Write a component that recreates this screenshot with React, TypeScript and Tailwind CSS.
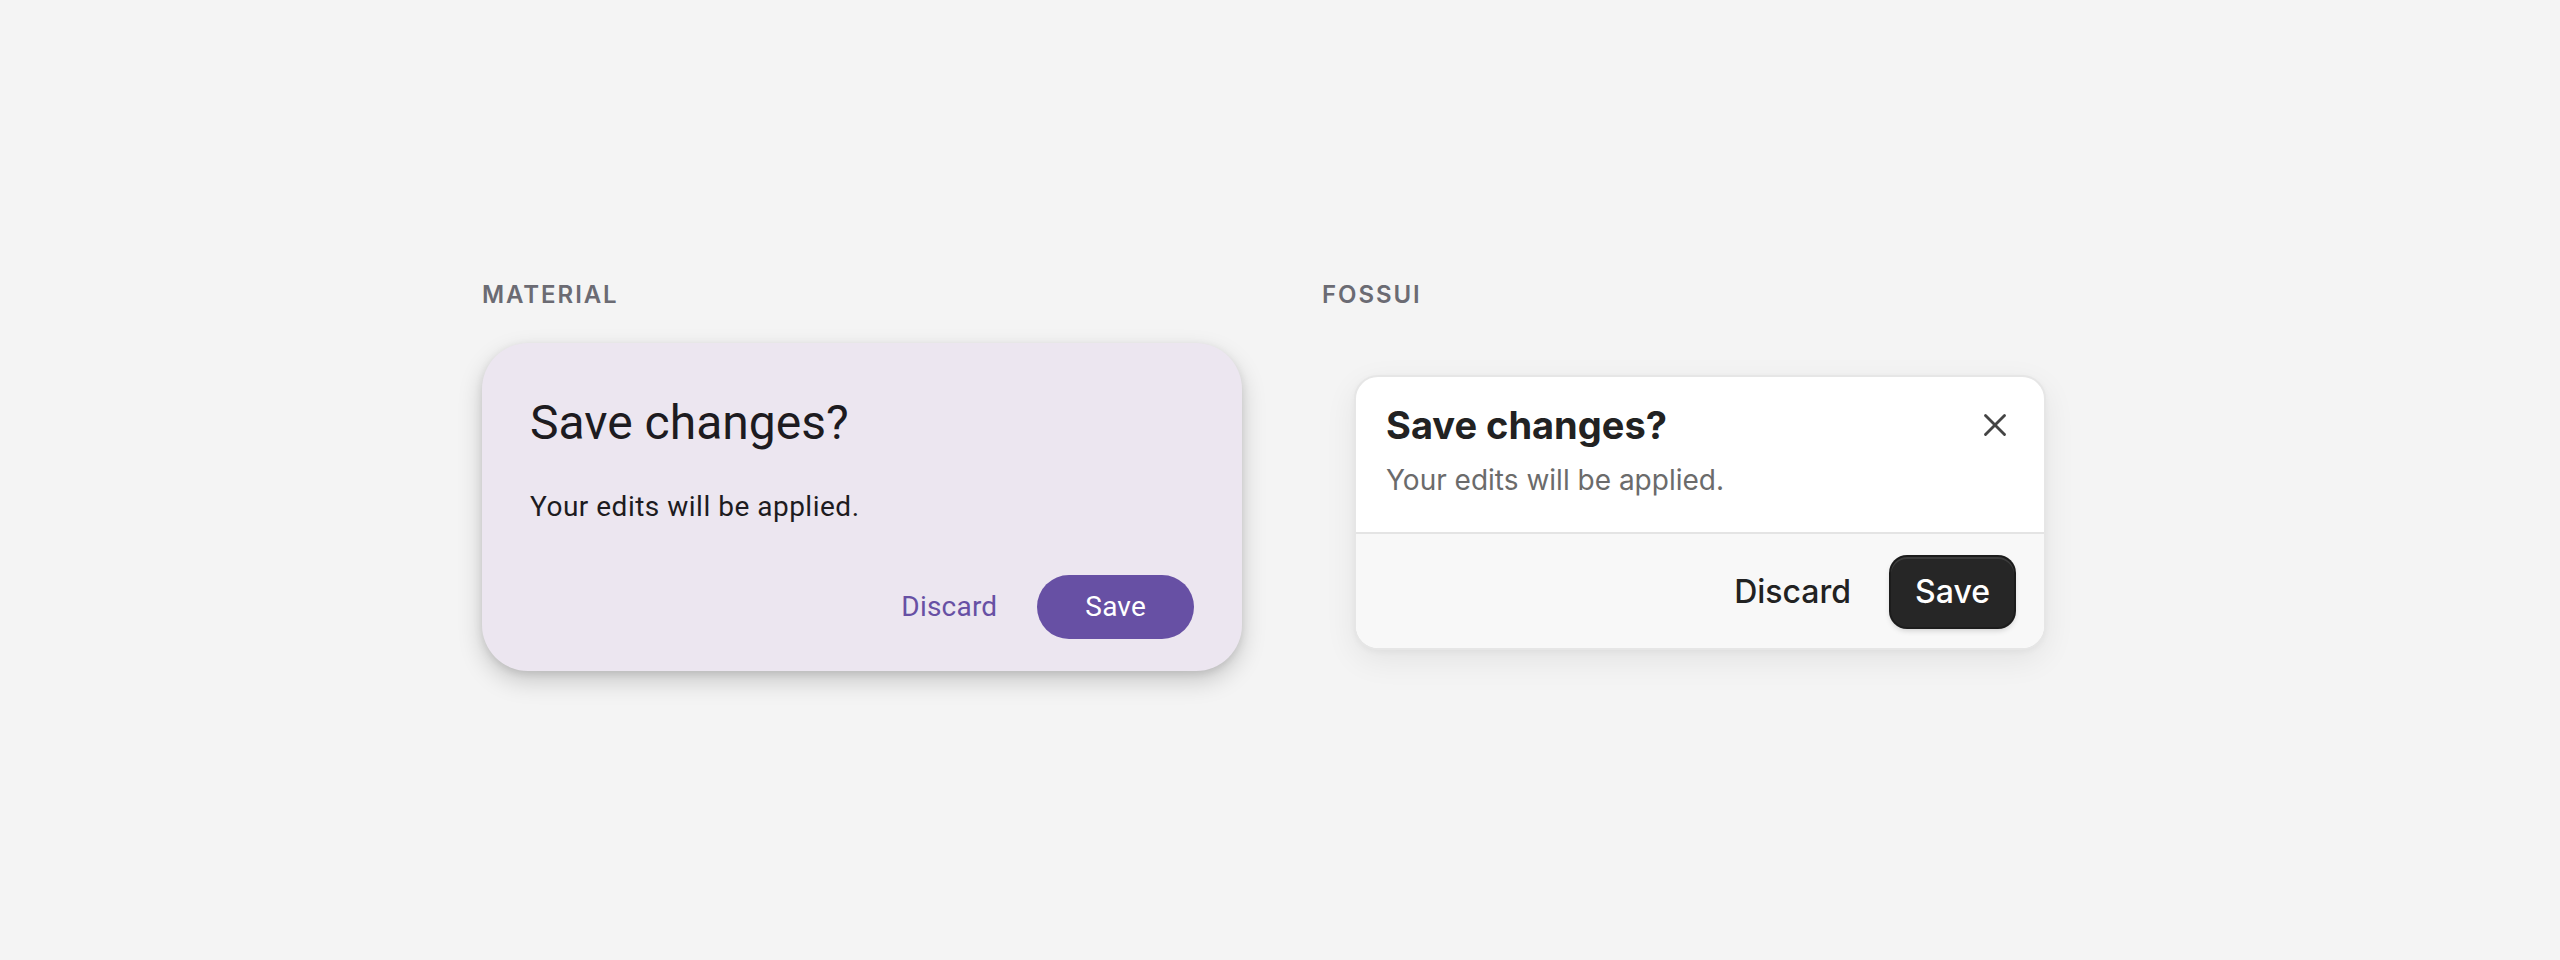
import { X } from 'lucide-react';

function Label({ children }: { children: string }) {
  return (
    <div className="h-[32px] font-['Inter',sans-serif] text-[24px] font-semibold leading-[32px] tracking-[0.08em] text-[#6b6b73]">
      {children}
    </div>
  );
}

function MaterialDialog() {
  return (
    <div className="mt-[32px] w-[760px] rounded-[46px] bg-[#ece6f0] px-[48px] pb-[32px] pt-[48px] font-['Roboto',sans-serif] shadow-[0_10px_24px_rgba(0,0,0,0.18),0_3px_8px_rgba(0,0,0,0.1)]">
      <h2 className="text-[48px] font-normal leading-[64px] text-[#1d1b20]">Save changes?</h2>
      <p className="mt-[32px] text-[28px] leading-[40px] tracking-[0.5px] text-[#1d1b20]">
        Your edits will be applied.
      </p>
      <div className="mt-[48px] flex justify-end gap-[16px]">
        <button className="h-[64px] rounded-full px-[24px] text-[28px] font-normal tracking-[0.2px] text-[#6750a4]">
          Discard
        </button>
        <button className="h-[64px] rounded-full bg-[#6750a4] px-[48px] text-[28px] font-normal tracking-[0.2px] text-white">
          Save
        </button>
      </div>
    </div>
  );
}

function FossuiDialog() {
  return (
    <div className="mt-[32px] p-[32px]">
      <div className="w-[692px] overflow-hidden rounded-[24px] border-2 border-[#e6e6e6] bg-white font-['Inter',sans-serif] shadow-[0_10px_32px_rgba(0,0,0,0.07),0_2px_6px_rgba(0,0,0,0.04)]">
        <div className="px-[30px] pb-[34px] pt-[26px]">
          <div className="flex items-center justify-between">
            <h2 className="text-[38px] font-bold leading-[44px] text-[#222222]">Save changes?</h2>
            <button className="text-[#444444]">
              <X size={38} strokeWidth={1.8} />
            </button>
          </div>
          <p className="mt-[15px] text-[28px] leading-[36px] text-[#6b6b6b]">Your edits will be applied.</p>
        </div>
        <div className="flex justify-end gap-[16px] border-t-2 border-[#e4e4e4] bg-[#f8f8f8] px-[30px] pb-[21px] pt-[23px]">
          <button className="h-[70px] rounded-[16px] px-[24px] text-[32px] font-medium text-[#222222]">Discard</button>
          <button className="h-[70px] rounded-[16px] bg-[#262626] px-[24px] text-[32px] font-medium text-white shadow-[inset_0_2px_0_rgba(255,255,255,0.1),0_0_0_2px_#1c1c1c,0_3px_6px_rgba(0,0,0,0.2)]">
            Save
          </button>
        </div>
      </div>
    </div>
  );
}

export default function App() {
  return (
    <div className="flex min-h-screen items-center justify-center bg-[#f4f4f4]">
      <div className="flex items-start gap-[80px]">
        <section>
          <Label>MATERIAL</Label>
          <MaterialDialog />
        </section>
        <section>
          <Label>FOSSUI</Label>
          <FossuiDialog />
        </section>
      </div>
    </div>
  );
}
